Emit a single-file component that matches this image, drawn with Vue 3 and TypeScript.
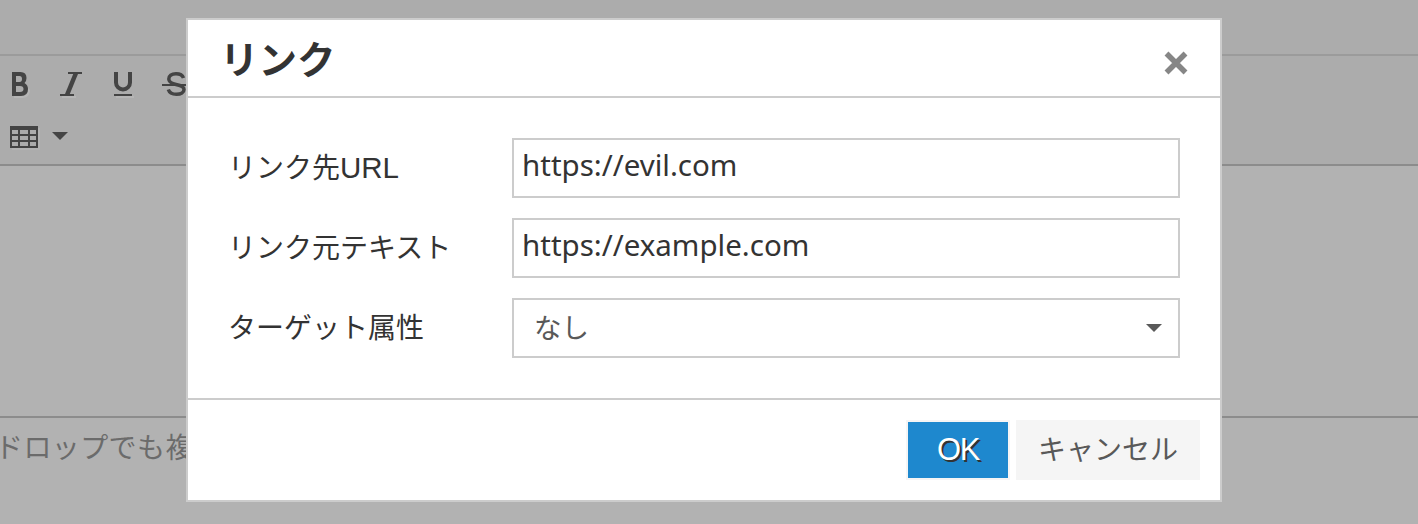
<script setup lang="ts">
import { ref } from 'vue'

const url = ref('https://evil.com')
const text = ref('https://example.com')
</script>

<template>
  <div class="page">
    <div class="editor-top"></div>
    <div class="toolbar">
      <div class="tool-row">
        <svg class="tools" width="200" height="40" viewBox="0 68 200 40">
          <path d="M14 98H23Q30 97 30 90L28 88V92L23 96H14Z" fill="#b6b6b6" />
          <g fill="none" stroke="#b6b6b6" transform="translate(2 2)">
            <path d="M60 95H74M114 95H132" stroke-width="2" />
          </g>
          <path fill-rule="evenodd" fill="#444" d="M12 72H20.500Q26.500 72 26.500 78Q26.500 81.500 24.500 83Q28 85 28 89Q28 96 21 96H12ZM16 76V82H19.500Q22 82 22 79Q22 76 19.500 76ZM16 86V92H20Q23.500 92 23.500 89Q23.500 86 20 86Z" />
          <g fill="none" stroke="#444">
            <path d="M68 73H82M60 95H74" stroke-width="2" />
            <path d="M76 73L67 95" stroke-width="4.500" />
            <path d="M116 72V82.500A7 7 0 0 0 130 82.500V72" stroke-width="4" />
            <path d="M114 95H132M162 85H190" stroke-width="2" />
            <path d="M183.500 78C182.500 75 180 73.700 176 73.700C171.500 73.700 168.800 76 168.800 79C168.800 82 171.500 83.500 176 84.500C181 85.500 184 87 184 89.500C184 92.500 181 94.300 176.500 94.300C172 94.300 169.300 92.500 168.300 89.500" stroke-width="3.500" />
          </g>
        </svg>
      </div>
      <div class="tool-row">
        <svg class="table-icon" width="30" height="24" viewBox="0 0 30 24">
          <path d="M2 24H30V2H28V22H2Z" fill="#b3b3b3" />
          <path fill-rule="evenodd" fill="#444" d="M0 0H28V22H0ZM2 4V8H8V4ZM10 4V8H18V4ZM20 4V8H26V4ZM2 10V14H8V10ZM10 10V14H18V10ZM20 10V14H26V10ZM2 16V20H8V16ZM10 16V20H18V16ZM20 16V20H26V16Z" />
        </svg>
        <svg class="caret" width="16" height="8" viewBox="0 0 16 8"><path d="M0 0H16L8 8Z" fill="#444" /></svg>
      </div>
    </div>
    <div class="editor-body"></div>
    <div class="hint">ドロップでも複</div>

    <section class="dialog">
      <header class="dialog-head">
        <h1>リンク</h1>
        <svg class="close" width="24" height="24" viewBox="0 0 24 24">
          <path d="M2.500 2.500L21.500 21.500M21.500 2.500L2.500 21.500" stroke="#868686" stroke-width="5.500" />
        </svg>
      </header>
      <div class="dialog-body">
        <div class="row">
          <label>リンク先<span class="latin">URL</span></label>
          <input v-model="url" class="field" type="text" />
        </div>
        <div class="row">
          <label>リンク元テキスト</label>
          <input v-model="text" class="field" type="text" />
        </div>
        <div class="row">
          <label>ターゲット属性</label>
          <div class="field select">
            <span>なし</span>
            <svg width="16" height="8" viewBox="0 0 16 8"><path d="M0 0H16L8 8Z" fill="#595959" /></svg>
          </div>
        </div>
      </div>
      <footer class="dialog-foot">
        <button class="btn ok" type="button">OK</button>
        <button class="btn cancel" type="button">キャンセル</button>
      </footer>
    </section>
  </div>
</template>

<style>
body { background: #b2b2b2; overflow: hidden; }
</style>

<style scoped>
* { box-sizing: border-box; }
.page {
  position: relative;
  height: 524px;
  overflow: hidden;
  background: #b2b2b2;
  font-family: "Noto Sans CJK JP", sans-serif;
  font-size: 28px;
  color: #333;
}
.editor-top { height: 56px; background: #acacac; border-bottom: 2px solid #9b9b9b; }
.toolbar { height: 110px; background: #acacac; border-bottom: 2px solid #8c8c8c; padding-top: 12px; }
.tool-row { display: flex; height: 52px; }
.tools { flex: none; }
.table-icon { margin: 6px 0 0 10px; }
.caret { margin: 12px 0 0 12px; }
.editor-body { height: 252px; border-bottom: 2px solid #8c8c8c; }
.hint { margin: 8px 0 0 -5px; line-height: 40px; color: #6b6b6b; white-space: nowrap; letter-spacing: 0.4px; }
.dialog {
  position: absolute;
  left: 186px;
  top: 18px;
  width: 1036px;
  height: 484px;
  border: 2px solid #ccc;
  background: #fff;
}
.dialog-head {
  display: flex;
  justify-content: space-between;
  height: 78px;
  padding: 0 32px;
  border-bottom: 2px solid #ccc;
}
h1 { margin: 0; font-size: 38.5px; line-height: 74px; font-weight: 700; }
.close { margin-top: 31px; }
.dialog-body {
  display: flex;
  flex-direction: column;
  gap: 20px;
  height: 302px;
  padding: 40px;
  border-bottom: 2px solid #ccc;
}
.row { display: flex; height: 60px; }
label { width: 284px; line-height: 56px; white-space: nowrap; }
.latin { font-family: "Liberation Sans", sans-serif; font-size: 29.5px; line-height: 1; }
.field {
  width: 668px;
  height: 60px;
  border: 2px solid #ccc;
  background: #fff;
  border-radius: 0;
  outline: 0;
  color: #333;
  padding: 0 8px 7px;
  font-family: "Noto Sans", sans-serif;
  font-size: 29.5px;
}
.select {
  display: flex;
  align-items: center;
  justify-content: space-between;
  padding: 0 16px 0 20px;
  font-family: "Noto Sans CJK JP", sans-serif;
  font-size: 27.5px;
  color: #595959;
}
.select span { margin-top: -4px; }
.dialog-foot { display: flex; justify-content: flex-end; gap: 6px; padding: 20px; }
.btn {
  height: 60px;
  margin: 0;
  padding: 0 0 4px;
  border: 2px solid #f5f5f5;
  font-family: "Noto Sans CJK JP", sans-serif;
  font-size: 28px;
}
.ok {
  width: 104px;
  padding-bottom: 0;
  background: #1e88ce;
  color: #fff;
  font-family: "Liberation Sans", sans-serif;
  font-size: 31px;
  letter-spacing: -1.5px;
  text-shadow: 2px 2px 0 #333;
}
.cancel { width: 184px; background: #f5f5f5; color: #595959; }
</style>
